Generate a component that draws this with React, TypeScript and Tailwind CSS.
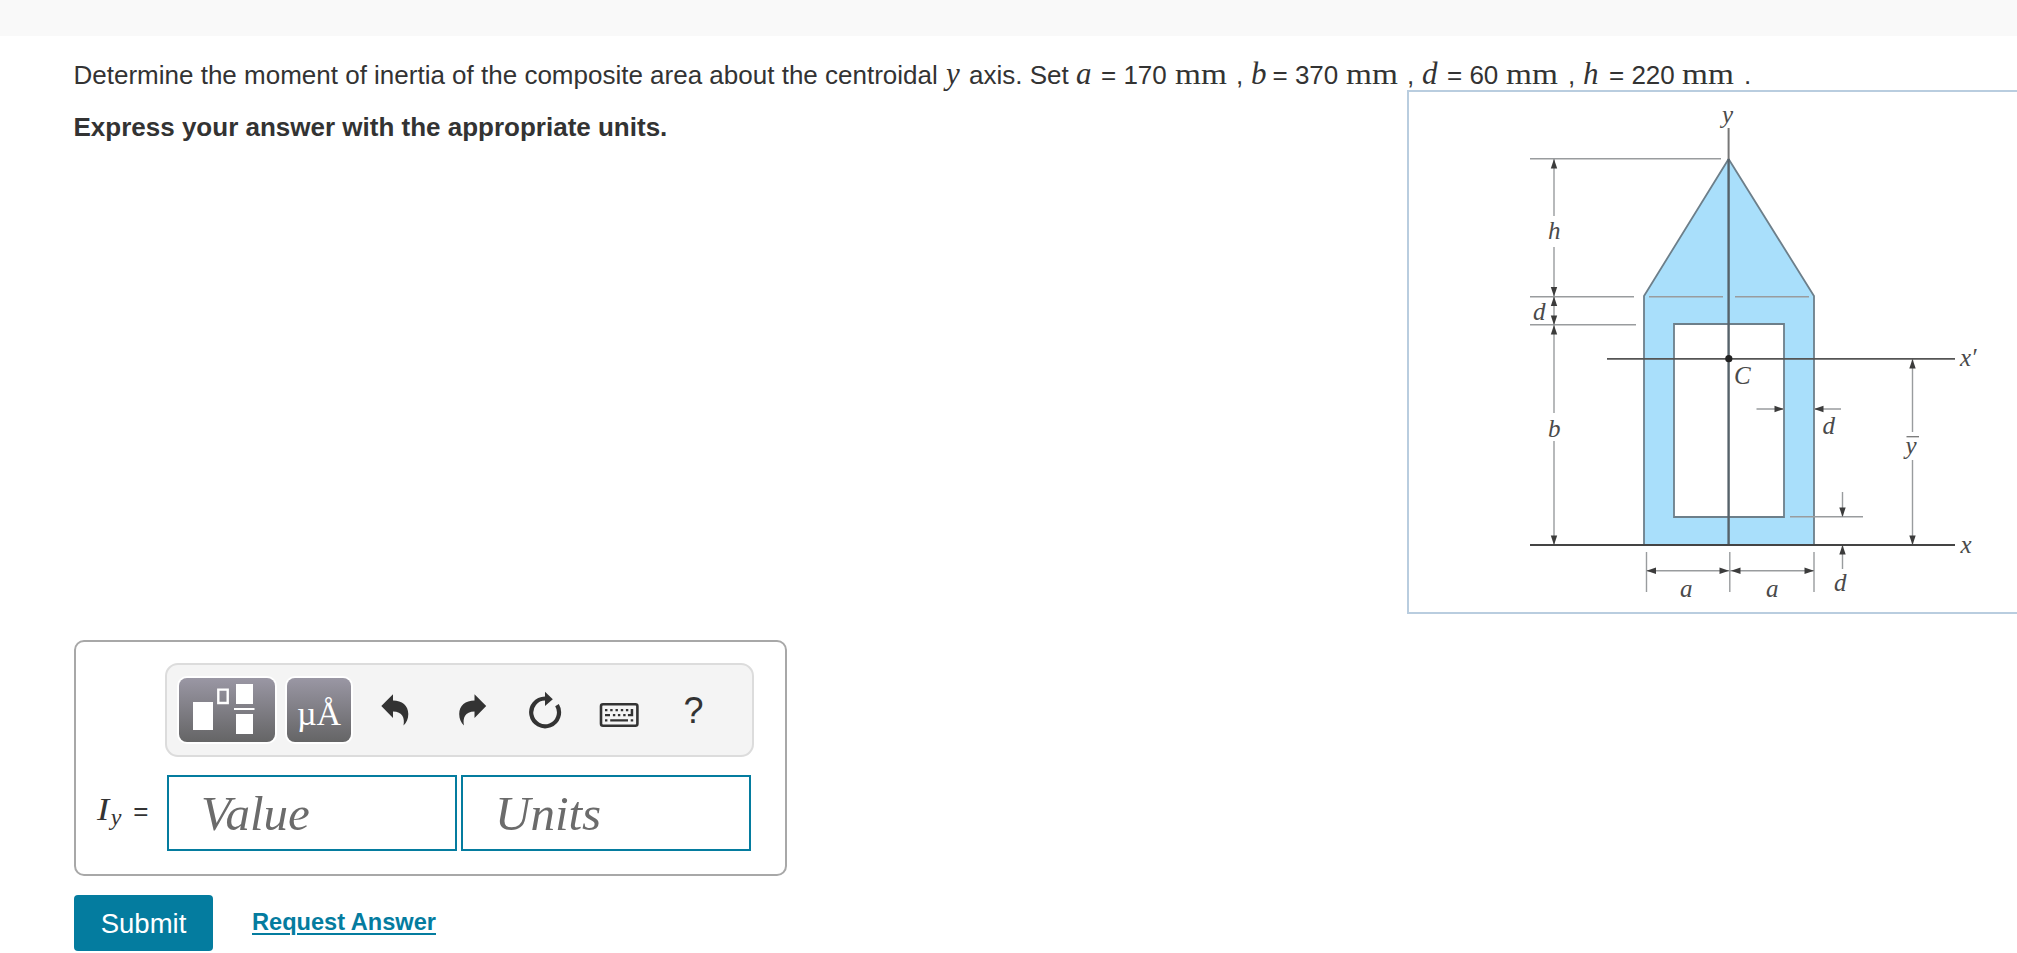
import React from "react";

const SANS = "font-['Liberation_Sans',Arial,sans-serif]";
const SERIF = "font-['Liberation_Serif','Times_New_Roman',serif]";

const Var = ({ children, className }: { children: string; className: string }) => (
  <span className={`${SERIF} shrink-0 text-[31px] italic leading-none ${className}`}>{children}</span>
);

const Unit = ({ className }: { className: string }) => (
  <span className={`shrink-0 ${className}`}>
    <span className={`${SERIF} inline-block origin-left scale-x-[1.11] text-[30px] leading-none`}>mm</span>
  </span>
);

const ProblemStatement = () => (
  <p className="flex h-[54px] items-baseline whitespace-nowrap pl-[73.5px] pt-[22px] text-[26px] leading-[32px]">
    <span className="w-[872.5px] shrink-0">
      Determine the moment of inertia of the composite area about the centroidal
    </span>
    <Var className="w-[23px]">y</Var>
    <span className="w-[107px] shrink-0">axis. Set</span>
    <Var className="w-[25px]">a</Var>
    <span className="w-[74px] shrink-0">= 170</span>
    <Unit className="w-[61px]" />
    <span className="w-[15px] shrink-0">,</span>
    <Var className="w-[21.5px]">b</Var>
    <span className="w-[73px] shrink-0">= 370</span>
    <Unit className="w-[61.5px]" />
    <span className="w-[15px] shrink-0">,</span>
    <Var className="w-[25px]">d</Var>
    <span className="w-[59px] shrink-0">= 60</span>
    <Unit className="w-[62px]" />
    <span className="w-[15px] shrink-0">,</span>
    <Var className="w-[26px]">h</Var>
    <span className="w-[73px] shrink-0">= 220</span>
    <Unit className="w-[62px]" />
    <span>.</span>
  </p>
);

type HeadProps = { x: number; y: number; dir: "up" | "down" | "left" | "right" };

const angles = { up: 0, right: 90, down: 180, left: 270 };

const Head = ({ x, y, dir }: HeadProps) => (
  <path d="M0 0L3.2 9.5H-3.2Z" fill="#3c3c3c" transform={`translate(${x} ${y}) rotate(${angles[dir]})`} />
);

const heads: HeadProps[] = [
  { x: 1554, y: 159, dir: "up" },
  { x: 1554, y: 296.5, dir: "down" },
  { x: 1554, y: 296.5, dir: "up" },
  { x: 1554, y: 325, dir: "down" },
  { x: 1554, y: 325, dir: "up" },
  { x: 1554, y: 545, dir: "down" },
  { x: 1784, y: 409, dir: "right" },
  { x: 1814, y: 409, dir: "left" },
  { x: 1912.5, y: 359, dir: "up" },
  { x: 1912.5, y: 545, dir: "down" },
  { x: 1842.5, y: 517, dir: "down" },
  { x: 1842.5, y: 545, dir: "up" },
  { x: 1646.5, y: 570.7, dir: "left" },
  { x: 1729, y: 570.7, dir: "right" },
  { x: 1731, y: 570.7, dir: "left" },
  { x: 1814, y: 570.7, dir: "right" },
];

const labels = [
  { x: 1722, y: 122.5, text: "y" },
  { x: 1548, y: 239, text: "h" },
  { x: 1533, y: 320, text: "d" },
  { x: 1548, y: 436.5, text: "b" },
  { x: 1734, y: 383.5, text: "C" },
  { x: 1822.5, y: 433.5, text: "d" },
  { x: 1905.5, y: 454, text: "y" },
  { x: 1960, y: 366, text: "x′" },
  { x: 1960.5, y: 552.5, text: "x" },
  { x: 1834, y: 590.5, text: "d" },
  { x: 1680, y: 597, text: "a" },
  { x: 1766, y: 597, text: "a" },
];

const Figure = () => (
  <div className="h-[524px] w-[610px] shrink-0 border-2 border-r-0 border-[#b9cddf] bg-white">
    <svg viewBox="1409 92 608 520" className="block h-[520px] w-[608px]">
      <path
        d="M1728.6 159L1814 296V545H1644V296ZM1674 324V517H1784V324Z"
        fill="#a9dffb"
        fillRule="evenodd"
        stroke="#6d7f8a"
        strokeWidth="1.8"
      />
      {/* extension lines */}
      <path
        d="M1530 158.7H1721M1530 296.7H1634M1649 296.7H1723M1735 296.7H1809M1530 324.7H1636M1790 516.7H1863M1646.5 552V592M1729.8 552V592M1814 552V592"
        stroke="#999c9e"
        strokeWidth="1.4"
      />
      {/* dimension lines */}
      <path
        d="M1554 159V216M1554 247V413M1554 441V545M1912.5 359V432M1912.5 460V545M1756.5 409H1784M1814 409H1841M1842.5 492V517M1842.5 545V569M1646.5 570.7H1814"
        stroke="#999c9e"
        strokeWidth="1.4"
      />
      <path d="M1906.5 436.7H1919" stroke="#777" strokeWidth="1.3" />
      <path d="M1607 358.8H1955" stroke="#555" strokeWidth="1.7" />
      <path d="M1728.6 128V159" stroke="#777" strokeWidth="2" />
      <path d="M1728.6 159V545" stroke="#56626a" strokeWidth="2.4" />
      <path d="M1530 545H1955" stroke="#444" strokeWidth="2.2" />
      <circle cx="1728.8" cy="358.7" r="3.6" fill="#222" />
      {heads.map((h, i) => (
        <Head key={i} {...h} />
      ))}
      {labels.map((l, i) => (
        <text key={i} x={l.x} y={l.y} fill="#4a4a4a" className={`${SERIF} text-[25px] italic`}>
          {l.text}
        </text>
      ))}
    </svg>
  </div>
);

const toolButton =
  "flex h-16 items-center justify-center rounded-lg bg-linear-to-b from-[#9a97a4] to-[#656566] shadow-[0_0_0_2px_#fff]";

const Toolbar = () => (
  <div className="flex h-[94px] w-[589px] items-start rounded-[13px] border-2 border-[#dcdcdc] bg-[#f4f4f4] pl-3 pt-[13px] text-[#333]">
    <button className={`${toolButton} w-24`}>
      <svg viewBox="0 0 96 64" className="h-16 w-24" fill="#fff">
        <path d="M14 24h20v28H14zM57 6h17v20H57zM57 36h17v20H57zM55 30h20.5v2H55z" />
        <path d="M39.3 11.6h9.4v13.4h-9.4z" fill="none" stroke="#fff" strokeWidth="2.4" />
      </svg>
    </button>
    <button className={`${toolButton} ml-3 w-16 ${SERIF} pt-[7px] text-[34px] leading-none text-white`}>µÅ</button>
    <button className="ml-[30px] mt-4">
      <svg viewBox="0 0 28 32" className="h-8 w-7" fill="currentColor">
        <path d="M0.3 12L12 0.3V6.5C21 6.5 27.3 11.5 27.3 20C27.3 25 25.5 28.5 22.5 31.6C24 24 21.5 17.5 12 17.5V24Z" />
      </svg>
    </button>
    <button className="ml-[50px] mt-4">
      <svg viewBox="0 0 28 32" className="h-8 w-7" fill="currentColor">
        <path d="M27.2 12L15.5 0.3V6.5C6.5 6.5 0.2 11.5 0.2 20C0.2 25 2 28.5 5 31.6C3.5 24 6 17.5 15.5 17.5V24Z" />
      </svg>
    </button>
    <button className="ml-[41px] mt-[13px]">
      <svg viewBox="0 0 34 40" className="h-10 w-[34px]">
        <path d="M17 7.5A13.9 13.9 0 1 0 29 14.2" fill="none" stroke="currentColor" strokeWidth="4.2" />
        <path d="M17 0.7L24.8 8.2L17 15Z" fill="currentColor" />
      </svg>
    </button>
    <button className="ml-[37px] mt-[25px]">
      <svg viewBox="0 0 40 24" className="h-6 w-10" fill="currentColor">
        <rect x="2" y="1.3" width="36.4" height="21.4" rx="2" fill="none" stroke="currentColor" strokeWidth="2.6" />
        <path d="M6 6h2.4v2.2H6zM11.2 6h2.4v2.2h-2.4zM16.5 6h2.4v2.2h-2.4zM21.8 6h2.4v2.2h-2.4zM26.9 6h2.4v2.2h-2.4zM31.7 6h2.5v7.2h-5.3V11h2.8zM6 11h5v2.2H6zM13.9 11h2.4v2.2h-2.4zM18.9 11h2.4v2.2h-2.4zM24.2 11h2.4v2.2h-2.4zM6 16.2h2.4v2.2H6zM11.2 16.2h17.8v2.2H11.2zM31.7 16.2h2.5v2.2h-2.5z" />
      </svg>
    </button>
    <button className={`${SANS} ml-[44.5px] mt-[15px] text-[36px] leading-9`}>?</button>
  </div>
);

const AnswerCard = () => (
  <div className="mt-[26px] h-[236px] w-[713px] rounded-[10px] border-2 border-[#a8a8a8] pl-[21px] pt-[21px]">
    <div className="pl-[68px]">
      <Toolbar />
    </div>
    <div className="mt-[18px] flex h-[76px] items-center">
      <label className="flex w-[70px] items-baseline pb-2 text-[26px]">
        <span className={`${SERIF} inline-block origin-left scale-x-[1.15] text-[32px] italic`}>I</span>
        <sub className={`${SERIF} top-[5px] ml-[3px] text-[24px] italic`}>y</sub>
        <span className="ml-[12px]">=</span>
      </label>
      <input
        placeholder="Value"
        className={`${SERIF} h-[76px] w-[290px] border-2 border-[#047c9f] pl-[32px] text-[49px] italic placeholder:text-[#6b6b6b]`}
      />
      <input
        placeholder="Units"
        className={`${SERIF} ml-1 h-[76px] w-[290px] border-2 border-[#047c9f] pl-[32px] text-[49px] italic placeholder:text-[#6b6b6b]`}
      />
    </div>
  </div>
);

const App = () => (
  <div className={`${SANS} h-[953px] w-full overflow-hidden bg-white text-[#333]`}>
    <div className="h-9 bg-[#f9f9f9]" />
    <ProblemStatement />
    <div className="flex justify-between pl-[73.5px]">
      <p className="pt-[21px] text-[26px] font-bold leading-[32px]">
        Express your answer with the appropriate units.
      </p>
      <Figure />
    </div>
    <div className="pl-[74px]">
      <AnswerCard />
      <div className="mt-[19px] flex items-center">
        <button className="h-14 w-[139px] rounded bg-[#047c9f] pt-px text-[27.5px] text-white">Submit</button>
        <a
          href="#"
          className="ml-[39px] text-[23.6px] font-bold leading-none text-[#047c9f] underline decoration-2 underline-offset-[3px]"
        >
          Request Answer
        </a>
      </div>
    </div>
  </div>
);

export default App;
